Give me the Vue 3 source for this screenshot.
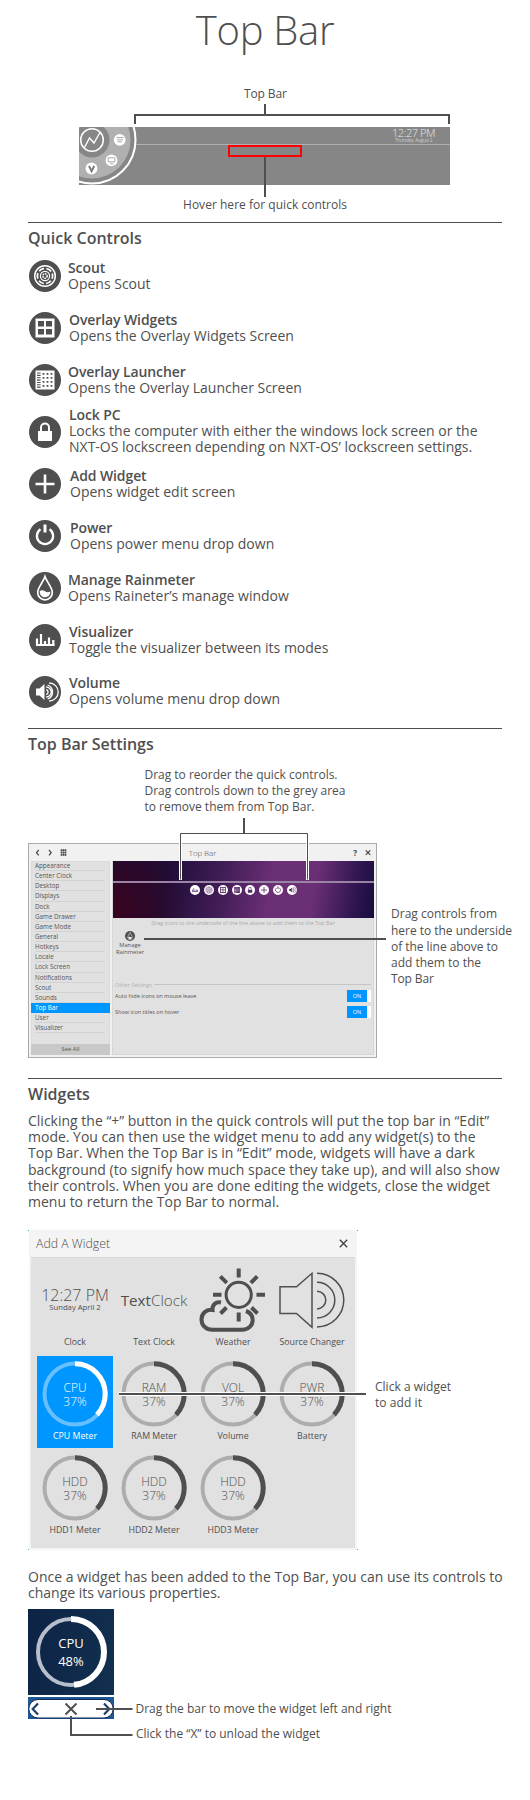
<script setup>
const glyphs = {
  scout: '<g fill="none" stroke="currentColor"><circle cx="16" cy="16" r="10.3" stroke-width="1.5"/><circle cx="16" cy="16" r="7.6" stroke-width="1.7" stroke-dasharray="5.6 2.36" stroke-dashoffset="2.8"/><circle cx="16" cy="16" r="4.6" stroke-width="1.2"/><circle cx="16" cy="16" r="2.2" stroke-width="1.5" stroke-dasharray="1.5 .8"/></g>',
  widgets: '<rect x="6.500" y="6.500" width="19" height="19" fill="currentColor"/><g fill="var(--bg)"><rect x="9" y="9" width="6" height="5.500"/><rect x="17" y="9" width="6" height="5.500"/><rect x="9" y="17" width="6" height="5.500"/><rect x="17" y="17" width="6" height="5.500"/></g>',
  launcher: '<rect x="6.5" y="6.5" width="19" height="19" fill="currentColor"/><g stroke="var(--bg)"><path d="M9.800 8.500v15.500" stroke-width="3.600" stroke-dasharray="1.100 1.250"/><path d="M14.500 9v15M18.500 9v15M22.500 9v15" stroke-width="1.800" stroke-dasharray="1.800 2.200"/></g>',
  lock: '<path d="M9 15h14v10H9z" fill="currentColor"/><path d="M12 15v-3.5a4 4 0 0 1 8 0V15" fill="none" stroke="currentColor" stroke-width="2"/>',
  plus: '<path d="M16 6.5v19M6.500 16h19" stroke="currentColor" stroke-width="2.600"/>',
  power: '<path d="M11.500 9.200a8.100 8.100 0 1 0 9 0" fill="none" stroke="currentColor" stroke-width="2.300"/><path d="M16 4.500v8" stroke="currentColor" stroke-width="3"/>',
  drop: '<path d="M16 4.500C14 10.500 8.700 15.500 8.700 20.500a7.300 7.300 0 0 0 14.600 0C23.300 15.500 18 10.500 16 4.500z" fill="none" stroke="currentColor" stroke-width="1.700"/><path d="M10.700 19c2-1.500 3.600-.8 5.300.3s3.500 1.200 5.300.3c.2 3.400-2.200 5.700-5.300 5.700s-5.500-2.500-5.300-6.300z" fill="currentColor"/>',
  bars: '<path d="M7 21h18.500" stroke="currentColor" stroke-width="2"/><path d="M8 21v-6.500M12 21V10M16 21v-4M20 21v-7.500M24.300 21v-5" stroke="currentColor" stroke-width="2.200"/>',
  volume: '<path d="M7 12.500h3.500L15.500 8v16l-5-4.500H7z" fill="currentColor"/><g fill="none" stroke="currentColor" stroke-width="1.300"><path d="M17.200 13.500a2.600 2.600 0 0 1 0 5M17.200 11a5 5 0 0 1 0 10M18.700 9a7.500 7.500 0 0 1 0 14M20.200 7a9 9 0 0 1 0 18"/></g>'
}

const controls = [
  { icon: 'scout', name: 'Scout', lines: ['Opens Scout'], cls: 'x0' },
  { icon: 'widgets', name: 'Overlay Widgets', lines: ['Opens the Overlay Widgets Screen'], cls: 'x1' },
  { icon: 'launcher', name: 'Overlay Launcher', lines: ['Opens the Overlay Launcher Screen'], cls: 'x0' },
  { icon: 'lock', name: 'Lock PC', lines: ['Locks the computer with either the windows lock screen or the', 'NXT-OS lockscreen depending on NXT-OS’ lockscreen settings.'], cls: 'x1 tall' },
  { icon: 'plus', name: 'Add Widget', lines: ['Opens widget edit screen'], cls: 'x2' },
  { icon: 'power', name: 'Power', lines: ['Opens power menu drop down'], cls: 'x2' },
  { icon: 'drop', name: 'Manage Rainmeter', lines: ['Opens Raineter’s manage window'], cls: 'x0' },
  { icon: 'bars', name: 'Visualizer', lines: ['Toggle the visualizer between its modes'], cls: 'x1' },
  { icon: 'volume', name: 'Volume', lines: ['Opens volume menu drop down'], cls: 'x1 up' }
]

const dock = ['bars', 'scout', 'widgets', 'launcher', 'lock', 'plus', 'power', 'volume']

const menu = ['Appearance', 'Center Clock', 'Desktop', 'Displays', 'Dock', 'Game Drawer', 'Game Mode', 'General', 'Hotkeys', 'Locale', 'Lock Screen', 'Notifications', 'Scout', 'Sounds', 'Top Bar', 'User', 'Visualizer']

const gauges = [
  { t: 'CPU', label: 'CPU Meter', on: true },
  { t: 'RAM', label: 'RAM Meter' },
  { t: 'VOL', label: 'Volume' },
  { t: 'PWR', label: 'Battery' },
  { t: 'HDD', label: 'HDD1 Meter' },
  { t: 'HDD', label: 'HDD2 Meter' },
  { t: 'HDD', label: 'HDD3 Meter' }
]

const paragraph = [
  'Clicking the “+” button in the quick controls will put the top bar in “Edit”',
  'mode. You can then use the widget menu to add any widget(s) to the',
  'Top Bar. When the Top Bar is in “Edit” mode, widgets will have a dark',
  'background (to signify how much space they take up), and will also show',
  'their controls. When you are done editing the widgets, close the widget',
  'menu to return the Top Bar to normal.'
]
</script>

<template>
  <main class="page">
    <h1>Top Bar</h1>

    <svg class="fig-bar" width="530" height="142" viewBox="0 80 530 142">
      <defs><clipPath id="bar"><rect x="79" y="127" width="371" height="58" /></clipPath></defs>
      <rect x="79" y="127" width="371" height="58" fill="#868686" />
      <path d="M134 144.500H450" stroke="#b0b0b0" />
      <g clip-path="url(#bar)">
        <circle cx="92" cy="140" r="43.500" fill="#868686" stroke="#fff" stroke-width="2" />
        <circle cx="92" cy="140" r="38.500" fill="#b0b0b0" />
        <circle cx="92" cy="140" r="17.500" fill="#868686" />
      </g>
      <g fill="none" stroke="#fff">
        <circle cx="92" cy="140" r="11.300" stroke-width="1.500" />
        <path d="M84.500 147.500l5-9.500 4.500 5 6-10.500" stroke-width="1.400" />
      </g>
      <g fill="#fff"><circle cx="119.700" cy="139.800" r="5.900" /><circle cx="111.500" cy="160.300" r="5.900" /><circle cx="91.500" cy="168.500" r="5.900" /></g>
      <g fill="none" stroke="#aaa">
        <path d="M116.500 137.500h7M117 139.700h6M117.500 141.800h4.500" stroke-width="1.100" />
        <path d="M108.200 157.800h6.700v4h-6.700zM110 163.800h3.500" />
        <path d="M89 166l2.600 5.200 2.600-5.200" stroke="#777" stroke-width="1.800" />
      </g>
      <text x="392" y="137" class="lt" font-size="11" textLength="43.500" fill="#e6e6e6">12:27 PM</text>
      <text x="395" y="142" font-size="4.600" textLength="37.500" fill="#ccc">Thursday, August 2</text>
      <rect x="229" y="146" width="72" height="10" fill="none" stroke="#f00" stroke-width="2" />
      <path d="M265 104v10M135 124v-9h314v9M265 157v40" fill="none" stroke="#4f4f4f" stroke-width="2" />
      <text x="244" y="98" class="call" textLength="43">Top Bar</text>
      <text x="183" y="209" class="call" textLength="164">Hover here for quick controls</text>
    </svg>

    <section class="controls">
      <h2>Quick Controls</h2>
      <ul>
        <li v-for="c in controls" :key="c.name" :class="c.cls">
          <svg class="disc" viewBox="0 0 32 32" v-html="glyphs[c.icon]"></svg>
          <div class="desc">
            <h3>{{ c.name }}</h3>
            <p v-for="l in c.lines" :key="l">{{ l }}</p>
          </div>
        </li>
      </ul>
    </section>

    <section class="settings">
      <h2>Top Bar Settings</h2>
      <div class="window">
        <header>
          <svg width="40" height="17" viewBox="0 0 40 17" fill="none" stroke="#444" stroke-width="1.200">
            <path d="M7.700 6L5.500 8.700l2.200 2.700M18 6l2.200 2.700L18 11.400" />
            <path d="M29.700 6.200h5.600M29.700 8.500h5.600M29.700 10.800h5.600" stroke-width="1.800" stroke-dasharray="1.600 .4" />
          </svg>
          <span class="wtitle">Top Bar</span>
          <svg width="40" height="17" viewBox="0 0 40 17" fill="none" stroke="#444" stroke-width="1.200">
            <text x="19.300" y="11.700" font-size="8" font-weight="700" fill="#444" stroke="none">?</text>
            <path d="M31.700 6.300l4.600 4.600M36.300 6.300l-4.600 4.600" />
          </svg>
        </header>
        <div class="wbody">
          <aside>
            <div class="menu">
              <div v-for="m in menu" :key="m" class="item" :class="{ sel: m === 'Top Bar' }"><span>{{ m }}</span></div>
            </div>
            <div class="all">See All</div>
          </aside>
          <div class="content">
            <div class="purple">
              <div class="rail"></div>
              <div class="dock">
                <svg v-for="d in dock" :key="d" viewBox="0 0 32 32" v-html="glyphs[d]"></svg>
              </div>
            </div>
            <p class="hint">Drag icons to the underside of the line above to add them to the Top Bar</p>
            <div class="spare">
              <svg viewBox="0 0 32 32" v-html="glyphs.drop"></svg>
              <span>Manage</span><span>Rainmeter</span>
            </div>
            <div class="other"><span>Other Settings</span><i></i></div>
            <div class="opt"><span>Auto hide icons on mouse leave</span><b>ON</b></div>
            <div class="opt"><span>Show icon titles on hover</span><b>ON</b></div>
          </div>
        </div>
      </div>
      <svg class="over" width="530" height="350" viewBox="0 728 530 350">
        <path d="M180.500 880v-46.500h127V880" fill="none" stroke="#fff" stroke-width="3" />
        <path d="M180.500 879.500v-46h127v46" fill="none" stroke="#4f4f4f" />
        <path d="M244 818v15M144 939h242" stroke="#4f4f4f" stroke-width="2" />
        <g class="call">
          <text x="144.500" y="779" textLength="193">Drag to reorder the quick controls.</text>
          <text x="144.500" y="795" textLength="201">Drag controls down to the grey area</text>
          <text x="144.500" y="811" textLength="170">to remove them from Top Bar.</text>
          <text x="391" y="918" textLength="106">Drag controls from</text>
          <text x="391" y="935" textLength="121">here to the underside</text>
          <text x="391" y="951" textLength="107">of the line above to</text>
          <text x="391" y="967" textLength="90">add them to the</text>
          <text x="391" y="983" textLength="43">Top Bar</text>
        </g>
      </svg>
    </section>

    <section class="widgets">
      <h2>Widgets</h2>
      <div class="para"><p v-for="l in paragraph" :key="l">{{ l }}</p></div>

      <div class="picker">
        <header>
          <span>Add A Widget</span>
          <svg width="9" height="9" viewBox="0 0 9 9"><path d="M.8.8l7.400 7.400M8.200.8L.8 8.200" stroke="#444" stroke-width="1.400" /></svg>
        </header>
        <div class="grid">
          <div class="cell">
            <div class="art clock"><span>12:27 PM</span><small>Sunday April 2</small></div>
            <label>Clock</label>
          </div>
          <div class="cell">
            <div class="art tclock"><span><b>Text</b>Clock</span></div>
            <label>Text Clock</label>
          </div>
          <div class="cell">
            <svg class="art" viewBox="0 0 76 76" fill="none" stroke="#4f4f4f">
              <circle cx="43.700" cy="32.800" r="12.600" stroke-width="3" />
              <path d="M43.700 6.500v9M43.700 50.500v9M18 32.800h8.500M61.500 32.800H70M25.300 14.300l6.500 6.500M62.300 14.300l-6.500 6.500M56.500 45.500l6 6M31.500 45.500l-6 6" stroke-width="4" />
              <path d="M26 40.500C20.500 39 17 43.500 17.500 48C11 47 6.500 52 6.500 57.500c0 6.500 5 10.300 11 10.300H47c6.500 0 10.700-4.500 10.700-9.800 0-4-2.500-7.500-6.700-9" stroke-width="4" />
            </svg>
            <label>Weather</label>
          </div>
          <div class="cell">
            <svg class="art" viewBox="0 0 76 76" fill="none" stroke="#4f4f4f" stroke-width="1.500">
              <path d="M6 24.800h16.500L38 11.300v54L22.500 51.500H6z" />
              <path d="M43 11.300a26.800 26.800 0 0 1 0 53.600M43 20.300a17.800 17.800 0 0 1 0 35.600M43 29.300a8.800 8.800 0 0 1 0 17.600" />
            </svg>
            <label>Source Changer</label>
          </div>
          <div v-for="g in gauges" :key="g.label" class="cell" :class="{ on: g.on }">
            <div class="art gauge">
              <svg viewBox="0 0 76 76" fill="none">
                <circle class="track" cx="38" cy="38" r="30.500" stroke-width="4" />
                <circle class="prog" cx="38" cy="38" r="30.200" stroke-width="5" pathLength="100" stroke-dasharray="37 63" transform="rotate(-90 38 38)" />
              </svg>
              <span>{{ g.t }}</span><span>37%</span>
            </div>
            <label>{{ g.label }}</label>
          </div>
        </div>
        <i class="dot tl"></i><i class="dot tr"></i><i class="dot bl"></i><i class="dot br"></i>
      </div>

      <div class="para once">
        <p>Once a widget has been added to the Top Bar, you can use its controls to</p>
        <p>change its various properties.</p>
      </div>

      <div class="cpu">
        <svg viewBox="0 0 86 86" fill="none" stroke="#fff">
          <circle cx="43" cy="43" r="33" stroke-width="4" stroke="#b6bfcb" />
          <circle cx="43" cy="43" r="33" stroke-width="6" pathLength="100" stroke-dasharray="48.500 51.500" transform="rotate(-90 43 43)" />
        </svg>
        <span>CPU</span><span>48%</span>
      </div>
      <div class="handle">
        <svg width="86" height="22" viewBox="0 0 86 22" fill="none">
          <rect x=".8" y="2.500" width="84.400" height="18.500" rx="9.200" fill="#fff" stroke="#0f2b52" />
          <path d="M10 6.500L4.700 12l5.300 5.500M76 6.500l5.300 5.500-5.300 5.500" stroke="#1d3f68" stroke-width="2.200" />
          <path d="M37.500 6.500l11 11M48.500 6.500l-11 11" stroke="#4f4f4f" stroke-width="2" />
        </svg>
      </div>
      <svg class="over" width="530" height="722" viewBox="0 1078 530 722">
        <path d="M119 1394h238" stroke="#fff" stroke-width="4" />
        <path d="M119 1394h247M96 1709h36.500M71 1716v19h61.500" fill="none" stroke="#4f4f4f" stroke-width="2" />
        <g class="call">
          <text x="375" y="1391" textLength="76">Click a widget</text>
          <text x="375" y="1407" textLength="47">to add it</text>
          <text x="135.500" y="1713" textLength="256">Drag the bar to move the widget left and right</text>
          <text x="136" y="1738" textLength="184">Click the “X” to unload the widget</text>
        </g>
      </svg>
    </section>
  </main>
</template>

<style>
body { margin: 0; background: #fff; }
</style>

<style scoped>
* { box-sizing: border-box; }
.page { width: 530px; height: 1800px; overflow: hidden; background: #fff; color: #4f4f4f; font-family: "Open Sans", "Noto Sans", sans-serif; white-space: nowrap; }
h1, h2, h3, p, ul { margin: 0; padding: 0; font-weight: 400; }
ul { list-style: none; }
svg { display: block; }
text { font-family: "Open Sans", "Noto Sans", sans-serif; }
h1 { height: 80px; padding-top: 2px; line-height: 56px; font-size: 40px; letter-spacing: -.3px; font-weight: 300; text-align: center; }
.fig-bar { height: 142px; }
.lt { font-weight: 300; }
.call { font-size: 12px; fill: #4f4f4f; font-weight: 500; }
section { position: relative; padding: 0 28px; }
section::before { content: ""; display: block; height: 1px; width: 474px; background: #4f4f4f; }
h2 { height: 31px; padding-top: 5px; line-height: 20px; font-size: 16px; font-weight: 600; }

.controls { height: 506px; }
.controls ul { padding-top: 6px; }
.controls li { height: 52px; display: flex; align-items: flex-start; }
.disc { flex: none; width: 32px; height: 32px; margin-left: 1px; border-radius: 50%; background: #4f4f4f; color: #fff; --bg: #4f4f4f; }
.desc { font-size: 14px; line-height: 16px; margin-left: 7px; }
.x1 .desc { margin-left: 8px; }
.x2 .desc { margin-left: 9px; }
.tall .desc { margin-top: -9px; }
.up .desc { margin-top: -1px; }
h3 { font-size: 14px; line-height: 16px; font-weight: 600; letter-spacing: -.1px; }

.settings { height: 350px; }
.window { margin-top: 83px; width: 349px; height: 215px; border: 1px solid #aaa; background: #f1f1f1; padding: 0 2px 2px; display: flex; flex-direction: column; }
.window header { height: 17px; display: flex; justify-content: space-between; align-items: center; }
.wtitle { font-size: 8px; font-weight: 300; letter-spacing: -.1px; line-height: 16px; }
.wbody { flex: 1; display: flex; gap: 2px; font-size: 6.300px; color: #555; }
aside { width: 79px; background: #e1e1e1; display: flex; flex-direction: column; justify-content: space-between; box-shadow: inset 0 0 0 1px #dadada; }
.item { height: 10.150px; line-height: 10px; padding: 0 5px 0 4px; }
.item span { display: block; height: 10.150px; border-bottom: 1px solid #d2d2d2; }
.item.sel { background: #0096ff; color: #fff; }
.item.sel span { border: 0; }
.all { height: 11px; line-height: 11px; text-align: center; background: #c8c8c8; font-size: 5.800px; }
.content { flex: 1; background: #e1e1e1; box-shadow: inset 0 0 0 1px #d6d6d6; font-size: 5.500px; }
.purple { height: 57px; margin-left: 1px; padding-top: 20px; background: radial-gradient(circle at 0 80%, #3a0420 0, rgba(58, 4, 32, 0) 28%), linear-gradient(100deg, #1c0a30 0, #1e0d36 20%, #421d57 42%, #6b2f76 60%, #6b2f76 76%, #2e1550 92%, #180d3c 100%); }
.rail { height: 2px; background: #9b83a5; }
.dock { display: flex; gap: 3.800px; justify-content: center; padding: 2px 0 0 0; }
.dock svg { width: 10px; height: 10px; border-radius: 50%; background: #fff; color: #5b2a6b; --bg: #fff; }
.hint { height: 13px; line-height: 11px; text-align: center; color: #aaa; font-size: 5.450px; }
.spare { width: 36px; height: 49.500px; display: flex; flex-direction: column; align-items: center; line-height: 7px; font-size: 5.800px; }
.spare svg { width: 10px; height: 10px; margin-bottom: 1px; border-radius: 50%; background: #4f4f4f; color: #fff; }
.other { display: flex; align-items: center; gap: 2px; height: 8px; padding: 0 3px; color: #b2b2b2; }
.other i { flex: 1; height: 1px; background: #c4c4c4; }
.opt { display: flex; justify-content: space-between; align-items: center; height: 15.500px; padding: 0 3px; line-height: 12px; }
.opt b { width: 24px; height: 12px; padding-right: 4px; background: linear-gradient(90deg, #0096ff 20px, #fff 20px); color: #fff; font-weight: 400; text-align: center; }
.over { position: absolute; left: 0; top: 0; pointer-events: none; }

.para { font-size: 14px; line-height: 16.200px; padding-top: 3px; }
.picker { position: relative; width: 328px; height: 320px; margin: 20px 0 0 1px; padding: 0 2px 2px; background: #f4f4f4; }
.picker header { display: flex; justify-content: space-between; align-items: center; height: 27px; padding: 0 7px 0 5px; font-size: 12.300px; font-weight: 300; }
.grid { height: 291px; background: #e1e1e1; border-top: 1px solid #d8d8d8; padding: 4px 0 0 6px; display: grid; grid-template-columns: repeat(4, 76px); column-gap: 3px; grid-auto-rows: 92px; row-gap: 2px; align-content: start; }
.cell { text-align: center; }
.cell label { display: block; font-size: 8.800px; line-height: 12px; margin-top: -2.500px; }
.on { background: #0096ff; color: #fff; }
.art { width: 76px; height: 76px; }
.clock, .tclock, .gauge, .cpu { display: flex; flex-direction: column; align-items: center; justify-content: center; }
.clock { padding-bottom: 2px; }
.clock span { font-size: 16px; line-height: 15px; font-weight: 300; }
.clock small { font-size: 7.700px; line-height: 8px; }
.tclock { font-size: 15.200px; font-weight: 300; }
.tclock b { font-weight: 500; }
.gauge, .cpu { position: relative; }
.gauge { padding-top: 2px; }
.gauge svg, .cpu svg { position: absolute; inset: 0; }
.gauge span { font-size: 12px; line-height: 14px; font-weight: 300; }
.track { stroke: #adadad; }
.prog { stroke: #4f4f4f; }
.on .track { stroke: #66bfff; }
.on .prog { stroke: #fff; }
.dot { position: absolute; width: 1px; height: 1px; background: #4ab; }
.tl { left: -1px; top: 0; }
.tr { right: -1px; top: 0; }
.bl { left: -1px; bottom: 0; }
.br { right: -1px; bottom: 0; }
.once { margin-top: 16px; line-height: 16px; }
.cpu { width: 86px; height: 86px; margin-top: 8px; background: linear-gradient(100deg, #0d2345, #12304f); color: #fff; font-size: 13px; line-height: 18px; }
.handle { width: 86px; height: 22px; margin-top: 2px; background: #1c5796; }
</style>
